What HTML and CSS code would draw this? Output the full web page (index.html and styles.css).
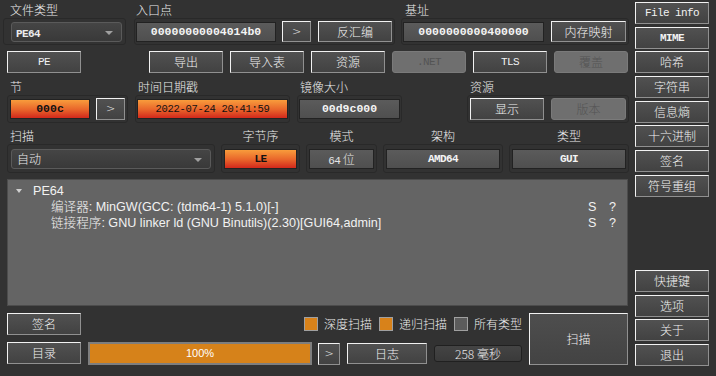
FILE: index.html
```html
<!DOCTYPE html>
<html lang="zh">
<head>
<meta charset="UTF-8" />
<title>Detect It Easy</title>
<link rel="stylesheet" href="styles.css">
</head>
<body>
<div class="app">
  <div class="main">

    <div class="row row-top">
      <div class="group g-type">
        <div class="label">文件类型</div>
        <div class="frame">
          <div class="combo"><span class="mono">PE64</span><i class="caret"></i></div>
        </div>
      </div>
      <div class="group g-entry">
        <div class="label">入口点</div>
        <div class="frame">
          <div class="field hex">00000000004014b0</div>
          <button class="btn arrow">&gt;</button>
          <button class="btn">反汇编</button>
        </div>
      </div>
      <div class="group g-base">
        <div class="label">基址</div>
        <div class="frame">
          <div class="field hex">0000000000400000</div>
          <button class="btn wide">内存映射</button>
        </div>
      </div>
    </div>

    <div class="row row-btns">
      <button class="btn mono first">PE</button>
      <button class="btn">导出</button>
      <button class="btn">导入表</button>
      <button class="btn">资源</button>
      <button class="btn mono off">.NET</button>
      <button class="btn mono">TLS</button>
      <button class="btn off">覆盖</button>
    </div>

    <div class="row row-info">
      <div class="group g-sect">
        <div class="label">节</div>
        <div class="frame">
          <div class="field hot hex">000c</div>
          <button class="btn arrow">&gt;</button>
        </div>
      </div>
      <div class="group g-time">
        <div class="label">时间日期戳</div>
        <div class="frame">
          <div class="field hot stamp">2022-07-24 20:41:59</div>
        </div>
      </div>
      <div class="group g-image">
        <div class="label">镜像大小</div>
        <div class="frame">
          <div class="field hex">00d9c000</div>
        </div>
      </div>
      <div class="group g-res">
        <div class="label">资源</div>
        <div class="frame">
          <button class="btn">显示</button>
          <button class="btn wide off">版本</button>
        </div>
      </div>
    </div>

    <div class="row row-scan">
      <div class="group g-scan">
        <div class="label">扫描</div>
        <div class="frame">
          <div class="combo"><span>自动</span><i class="caret"></i></div>
        </div>
      </div>
      <div class="group g-endian centered">
        <div class="label">字节序</div>
        <div class="frame">
          <div class="field hot small">LE</div>
        </div>
      </div>
      <div class="group g-mode centered">
        <div class="label">模式</div>
        <div class="frame">
          <div class="field plain"><span class="mono">64</span>&nbsp;位</div>
        </div>
      </div>
      <div class="group g-arch centered">
        <div class="label">架构</div>
        <div class="frame">
          <div class="field small">AMD64</div>
        </div>
      </div>
      <div class="group g-kind centered">
        <div class="label">类型</div>
        <div class="frame">
          <div class="field small">GUI</div>
        </div>
      </div>
    </div>

    <div class="result">
      <div class="node"><i class="twisty"></i>PE64</div>
      <div class="leaf">
        <span class="name">编译器: MinGW(GCC: (tdm64-1) 5.1.0)[-]</span>
        <span class="s">S</span><span class="q">?</span>
      </div>
      <div class="leaf">
        <span class="name">链接程序: GNU linker ld (GNU Binutils)(2.30)[GUI64,admin]</span>
        <span class="s">S</span><span class="q">?</span>
      </div>
    </div>

    <div class="bottom">
      <div class="col-left">
        <button class="btn">签名</button>
        <button class="btn">目录</button>
      </div>
      <div class="col-mid">
        <div class="checks">
          <span class="box on"></span><span class="cap">深度扫描</span>
          <span class="box on"></span><span class="cap">递归扫描</span>
          <span class="box"></span><span class="cap">所有类型</span>
        </div>
        <div class="progress-row">
          <div class="progress">100%</div>
          <button class="btn arrow small-arrow">&gt;</button>
          <button class="btn log">日志</button>
          <div class="timer">258 毫秒</div>
        </div>
      </div>
      <button class="btn scan-btn">扫描</button>
    </div>

  </div>

  <div class="side">
    <div class="side-group">
      <button class="btn mono">File info</button>
      <button class="btn mono bold">MIME</button>
      <button class="btn">哈希</button>
      <button class="btn">字符串</button>
      <button class="btn">信息熵</button>
      <button class="btn">十六进制</button>
      <button class="btn">签名</button>
      <button class="btn">符号重组</button>
    </div>
    <div class="side-group">
      <button class="btn">快捷键</button>
      <button class="btn">选项</button>
      <button class="btn">关于</button>
      <button class="btn">退出</button>
    </div>
  </div>
</div>
</body>
</html>
```

FILE: styles.css
```css
body {
  margin: 0;
  width: 716px;
  height: 376px;
  overflow: hidden;
  background: #323232;
  color: #ececec;
  font-family: "Noto Sans CJK SC", "Liberation Sans", sans-serif;
  font-size: 12px;
  font-weight: 300;
}
.app {
  display: flex;
  box-sizing: border-box;
  height: 376px;
  padding: 2px 0 0 3px;
}
.main {
  width: 626px;
}
.mono {
  font-family: "Liberation Mono", "Noto Sans CJK SC", monospace;
  font-size: 11px;
  letter-spacing: -0.6px;
}
.bold {
  font-weight: bold;
}

/* rows of groups */
.row {
  display: flex;
}
.group .label {
  height: 16px;
  line-height: 16px;
  padding-left: 3px;
  white-space: nowrap;
}
.group.centered .label {
  padding-left: 0;
  text-align: center;
}
.frame {
  display: flex;
  align-items: center;
  box-sizing: border-box;
  border: 1px solid #292929;
  border-radius: 3px;
  padding: 0 2px;
}

/* buttons */
.btn {
  box-sizing: border-box;
  width: 74px;
  height: 22px;
  padding: 0;
  margin: 0;
  border: 1px solid;
  border-color: #f2f2f2 #909090 #909090 #f2f2f2;
  background: linear-gradient(#515151, #424242);
  color: #f2f2f2;
  font-family: "Noto Sans CJK SC", "Liberation Sans", sans-serif;
  font-size: 12px;
  font-weight: 300;
  line-height: 18px;
}
.btn.mono {
  font-family: "Liberation Mono", monospace;
  font-size: 11px;
  font-weight: normal;
}
.btn.bold {
  font-weight: bold;
}
.btn.wide {
  width: 75px;
}
.btn.arrow {
  width: 29px;
  font-family: "DejaVu Sans", sans-serif;
  font-size: 11px;
}
.btn.off {
  border: 1px solid #7a7a7a;
  border-radius: 3px;
  background: #6f6f6f;
  color: #545454;
}

/* value fields */
.field {
  box-sizing: border-box;
  height: 20px;
  line-height: 18px;
  border: 1px solid #222;
  background: linear-gradient(#5b5b5b, #4f4f4f);
  color: #f4f4f4;
  text-align: center;
  white-space: nowrap;
}
.field.hex {
  font-family: "Liberation Mono", monospace;
  font-size: 11.5px;
  font-weight: bold;
}
.field.small {
  font-family: "Liberation Mono", monospace;
  font-size: 11px;
  letter-spacing: -0.6px;
  font-weight: bold;
}
.field.plain {
  color: #e4e4e4;
}
.field.hot {
  background: linear-gradient(#f89c3c, #e8632a 55%, #d2281c);
  color: #111;
}
.field.stamp {
  font-family: "Liberation Mono", monospace;
  font-size: 10.5px;
  letter-spacing: -0.3px;
}

/* combo boxes */
.combo {
  position: relative;
  box-sizing: border-box;
  height: 20px;
  line-height: 18px;
  padding-left: 4px;
  border: 1px solid #5a5a5a;
  border-radius: 3px;
  background: linear-gradient(#454545, #393939);
  color: #ececec;
}
.combo .mono {
  font-weight: bold;
}
.caret {
  position: absolute;
  right: 8px;
  top: 8px;
  border-left: 4px solid transparent;
  border-right: 4px solid transparent;
  border-top: 4px solid #a0a0a0;
}

/* row 1 */
.row-top .frame {
  height: 27px;
}
.g-type .label {
  padding-left: 7px;
}
.g-type .frame {
  width: 123px;
  padding: 0 3px 0 7px;
}
.g-type .combo {
  width: 111px;
}
.g-entry {
  margin-left: 8px;
}
.g-entry .label {
  padding-left: 2px;
}
.g-entry .frame {
  padding: 0 2px 0 1px;
}
.g-entry .field {
  width: 140px;
  margin-right: 6px;
}
.g-entry .arrow {
  margin-right: 7px;
}
.g-entry .btn,
.g-base .btn {
  height: 21px;
}
.g-base {
  margin-left: 6px;
}
.g-base .label {
  padding-left: 4px;
}
.g-base .frame {
  padding: 0 2px 0 1px;
}
.g-base .field {
  width: 141px;
  margin-right: 7px;
}

/* row 2 */
.row-btns {
  margin-top: 6px;
  padding-left: 4px;
  gap: 7px;
}
.row-btns .first {
  margin-right: 61px;
}

/* row 3 */
.row-info {
  margin-top: 6px;
}
.row-info .frame {
  height: 28px;
}
.g-sect {
  margin-left: 4px;
}
.g-sect .field {
  width: 80px;
  margin-right: 6px;
}
.g-time,
.g-image {
  margin-left: 7px;
}
.g-time .frame,
.g-image .frame {
  padding: 0 1px;
}
.g-time .field {
  width: 151px;
}
.g-image .field {
  width: 101px;
}
.g-res {
  margin-left: 65px;
}
.g-res .btn:first-child {
  margin-right: 7px;
}

/* row 4 */
.row-scan {
  margin-top: 5px;
}
.row-scan .frame {
  height: 29px;
}
.g-scan {
  margin-left: 4px;
}
.g-scan .frame {
  padding: 0 3px;
}
.g-scan .combo {
  width: 200px;
  padding-left: 5px;
}
.g-endian,
.g-mode,
.g-arch,
.g-kind {
  margin-left: 6px;
}
.g-endian .field {
  width: 73px;
}
.g-mode .frame,
.g-arch .frame,
.g-kind .frame {
  padding: 0 2px;
}
.g-mode .field {
  width: 65px;
}
.g-arch .field,
.g-kind .field {
  width: 114px;
}

/* result tree */
.result {
  box-sizing: border-box;
  width: 621px;
  height: 127px;
  margin: 6px 0 0 4px;
  padding: 3px 12px 0 0;
  border: 1px solid #4c4c4c;
  background: #646464;
  font-family: "Liberation Sans", "Noto Sans CJK SC", sans-serif;
  font-size: 12.6px;
  color: #f2f2f2;
}
.node,
.leaf {
  display: flex;
  align-items: center;
  height: 16px;
  line-height: 16px;
}
.node {
  padding-left: 8px;
}
.twisty {
  width: 0;
  height: 0;
  margin-right: 11px;
  border-left: 3px solid transparent;
  border-right: 3px solid transparent;
  border-top: 4px solid #cfcfcf;
}
.leaf {
  padding-left: 43px;
}
.leaf .name {
  flex: 1;
}
.leaf .s {
  width: 21px;
}
.leaf .q {
  width: 6px;
}

/* bottom area */
.bottom {
  display: flex;
  gap: 7px;
  height: 52px;
  margin: 7px 0 0 4px;
}
.col-left {
  display: flex;
  flex-direction: column;
  gap: 7px;
}
.col-mid {
  display: flex;
  flex-direction: column;
  justify-content: space-between;
  width: 434px;
}
.checks {
  display: flex;
  align-items: center;
  justify-content: flex-end;
  height: 22px;
}
.box {
  box-sizing: border-box;
  width: 14px;
  height: 14px;
  margin-right: 6px;
  border: 1px solid #a0a0a0;
  background: #5c5c5c;
}
.box.on {
  background: #d8821a;
}
.cap {
  margin-right: 7px;
  line-height: 16px;
}
.cap:last-child {
  margin-right: 0;
}
.progress-row {
  display: flex;
  align-items: center;
  height: 23px;
}
.progress {
  box-sizing: border-box;
  width: 224px;
  height: 23px;
  line-height: 19px;
  border: 2px solid #7e7e7e;
  background: #d6821a;
  color: #fff;
  text-align: center;
  font-family: "Liberation Sans", sans-serif;
  font-size: 11px;
}
.btn.small-arrow {
  width: 22px;
  margin-left: 6px;
}
.btn.log {
  width: 80px;
  height: 21px;
  margin-left: 7px;
}
.timer {
  box-sizing: border-box;
  width: 88px;
  height: 17px;
  line-height: 15px;
  margin-left: 7px;
  border: 1px solid #202020;
  border-radius: 3px;
  background: linear-gradient(#444, #3a3a3a);
  color: #e8e8e8;
  text-align: center;
}
.btn.scan-btn {
  width: 99px;
  height: 52px;
  background: linear-gradient(#4e4e4e, #434343);
}

/* side column */
.side {
  display: flex;
  flex-direction: column;
  justify-content: space-between;
  width: 74px;
  height: 364px;
  margin-left: 6px;
}
.side-group {
  display: flex;
  flex-direction: column;
  gap: 2.7px;
}
```
